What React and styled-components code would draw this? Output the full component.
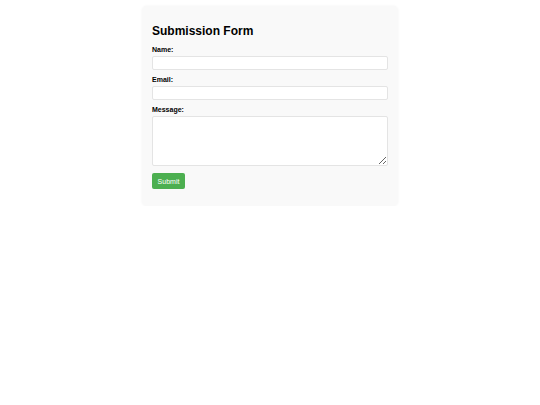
import React from "react";
import styled, { createGlobalStyle } from "styled-components";

const GlobalStyle = createGlobalStyle`
    html, body {
        margin: 0;
        padding: 0;
        background: #ffffff;
    }
    body {
        font-family: "Liberation Sans", Arial, sans-serif;
    }
`;

const App = () => {
    return (
        <>
            <GlobalStyle />
            <Card>
                <Title>Submission Form</Title>
                <form onSubmit={(e) => e.preventDefault()}>
                    <Label htmlFor="name">Name:</Label>
                    <Input id="name" type="text" />
                    <Label htmlFor="email">Email:</Label>
                    <Input id="email" type="email" />
                    <Label htmlFor="message">Message:</Label>
                    <TextArea id="message" />
                    <SubmitBtn type="submit">Submit</SubmitBtn>
                </form>
            </Card>
        </>
    );
};

const Card = styled.div`
    box-sizing: border-box;
    width: 256px;
    margin: 6px auto 0;
    padding: 10px 10px 17px;
    background: #f9f9f9;
    border-radius: 5px;
    box-shadow: 0 0 3px rgba(0, 0, 0, 0.05);
`;

const Title = styled.h2`
    margin: 8px 0 7px;
    font-size: 12px;
    line-height: 14px;
    font-weight: bold;
    color: #000;
`;

const Label = styled.label`
    display: block;
    margin-bottom: 2px;
    font-size: 7px;
    line-height: 9px;
    font-weight: bold;
    color: #000;
`;

const Input = styled.input`
    display: block;
    box-sizing: border-box;
    width: 100%;
    height: 14px;
    margin: 0 0 5px;
    padding: 2px 4px;
    border: 1px solid #e4e4e4;
    border-radius: 2px;
    background: #fff;
    font-size: 7px;
    outline: none;
`;

const TextArea = styled.textarea`
    display: block;
    box-sizing: border-box;
    width: 100%;
    height: 50px;
    margin: 0 0 7px;
    padding: 2px 4px;
    border: 1px solid #e4e4e4;
    border-radius: 2px;
    background: #fff;
    font-size: 7px;
    outline: none;
`;

const SubmitBtn = styled.button`
    display: block;
    width: 33px;
    height: 16px;
    padding: 0;
    border: none;
    border-radius: 2px;
    background: #4caf50;
    color: #fff;
    font-family: "Liberation Sans", Arial, sans-serif;
    font-size: 7px;
    cursor: pointer;
`;

export default App;
